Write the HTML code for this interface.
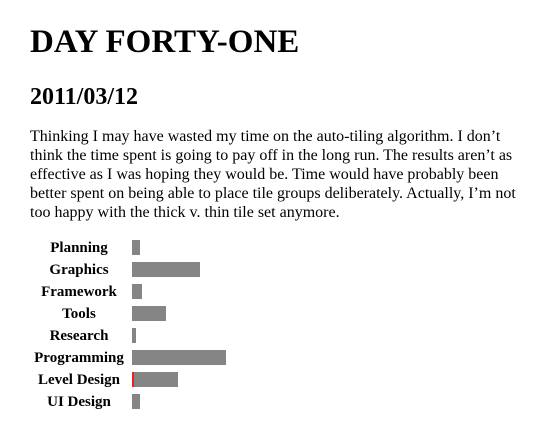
<!DOCTYPE html>
<html><head><style>
html,body{margin:0;padding:0;background:#fff;}
body{font-family:"Liberation Serif",serif;color:#000;width:540px;height:433px;overflow:hidden;position:relative;}
h1{position:absolute;left:30px;top:24px;margin:0;font-size:33px;line-height:36px;font-weight:bold;}
h2{position:absolute;left:30px;top:83px;margin:0;font-size:24px;line-height:28px;font-weight:bold;}
p{position:absolute;left:30px;top:127px;width:490px;margin:0;font-size:16px;line-height:19px;}
.row{position:absolute;left:0;height:22px;width:540px;}
.lab{position:absolute;left:28px;width:102px;text-align:center;font-weight:bold;font-size:15px;line-height:22px;top:1px;}
.bar{position:absolute;left:132px;top:4px;height:15px;background:#858585;}
</style></head><body>
<h1>DAY FORTY-ONE</h1>
<h2>2011/03/12</h2>
<p>Thinking I may have wasted my time on the auto-tiling algorithm. I don’t think the time spent is going to pay off in the long run. The results aren’t as effective as I was hoping they would be. Time would have probably been better spent on being able to place tile groups deliberately. Actually, I’m not too happy with the thick v. thin tile set anymore.</p>
<div class="row" style="top:236px"><div class="lab">Planning</div><div class="bar" style="width:8px"></div></div>
<div class="row" style="top:258px"><div class="lab">Graphics</div><div class="bar" style="width:68px"></div></div>
<div class="row" style="top:280px"><div class="lab">Framework</div><div class="bar" style="width:10px"></div></div>
<div class="row" style="top:302px"><div class="lab">Tools</div><div class="bar" style="width:34px"></div></div>
<div class="row" style="top:324px"><div class="lab">Research</div><div class="bar" style="width:4px"></div></div>
<div class="row" style="top:346px"><div class="lab">Programming</div><div class="bar" style="width:94px"></div></div>
<div class="row" style="top:368px"><div class="lab">Level Design</div><div class="bar" style="border-left:2px solid #e8231c;width:44px"></div></div>
<div class="row" style="top:390px"><div class="lab">UI Design</div><div class="bar" style="width:8px"></div></div>
</body></html>
